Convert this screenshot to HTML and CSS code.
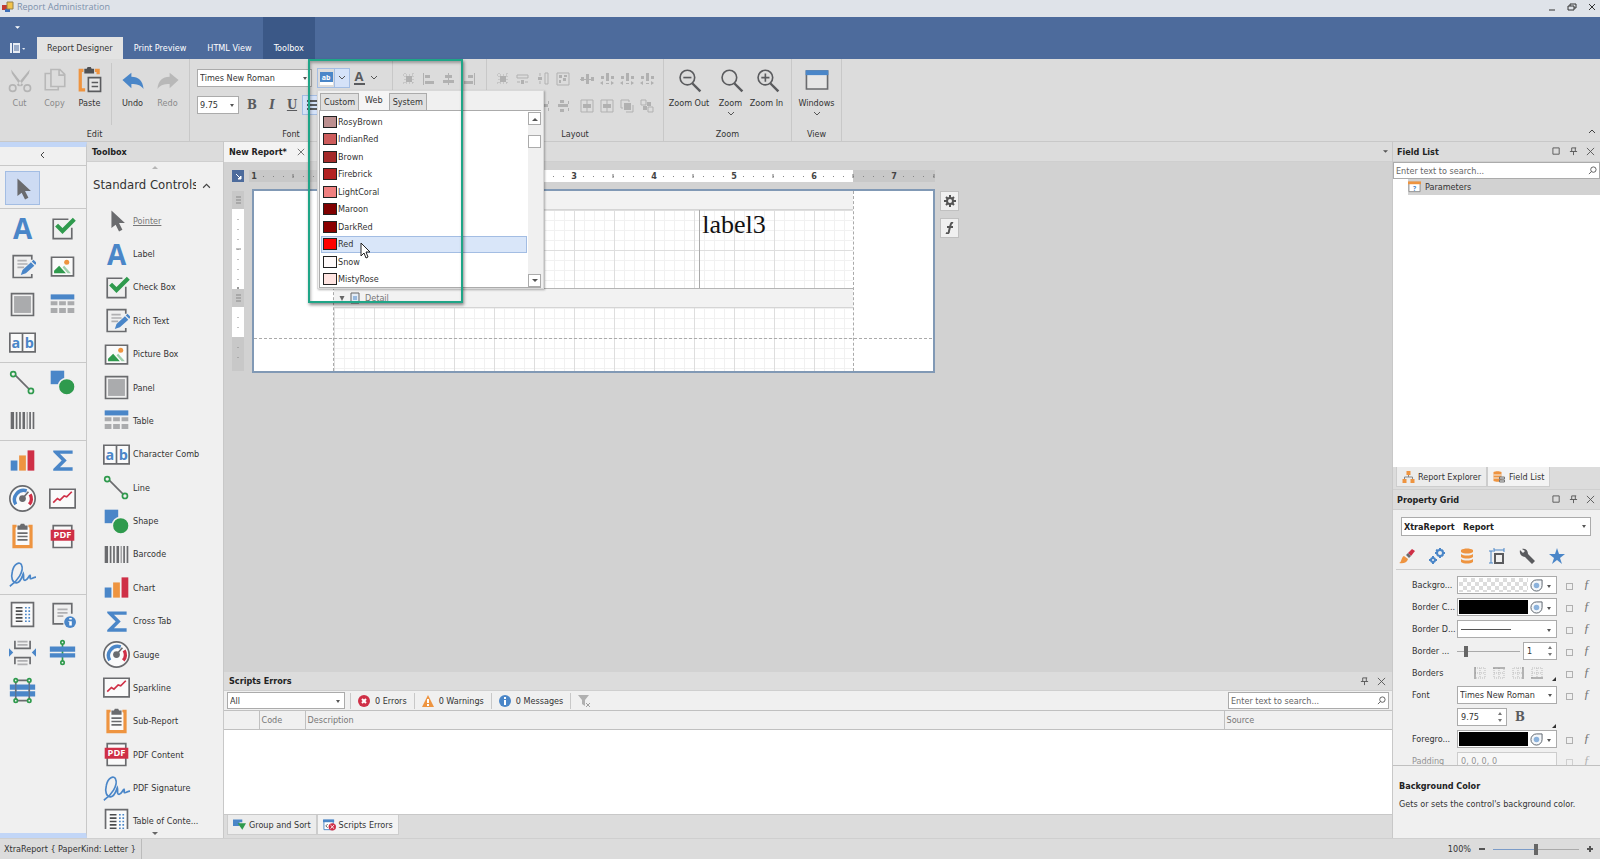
FILE: index.html
```html
<!DOCTYPE html>
<html lang="en">
<head>
<meta charset="utf-8">
<meta content="width=device-width,initial-scale=1" name="viewport">
<title>Report Administration</title>
<link rel="stylesheet" href="styles.css">
</head>

<body>
<!-- icon set, 32 unit grid -->
<svg class="defs" aria-hidden="true">
	<symbol id="i-pointer" viewBox="0 0 32 32"><path fill="#6a6b6e" d="M10 4v21l5-4 4 8 4-2-4-8h7z"/></symbol>
	<symbol id="i-label" viewBox="0 0 32 32"><text x="16" y="28" text-anchor="middle" class="glyph" font-size="33">A</text></symbol>
	<symbol id="i-check" viewBox="0 0 32 32"><path fill="none" stroke="#6a6b6e" stroke-width="2" d="M23 5H5v23h22V15"/><path fill="none" stroke="#2f9a4d" stroke-width="5" d="M9 12l7 7L30 5"/></symbol>
	<symbol id="i-rich" viewBox="0 0 32 32"><path fill="none" stroke="#6a6b6e" stroke-width="2" d="M27 8V3H5v26h22v-4"/><path stroke="#b0b0b2" stroke-width="2" d="M10 9h11M10 13h12M10 17h8"/><path fill="#4a86c8" d="M14 26l2-6 10-9 4 4-10 9zM27 10l2-2 4 4-2 2z"/></symbol>
	<symbol id="i-picture" viewBox="0 0 32 32"><path fill="#fafafa" stroke="#6a6b6e" stroke-width="2" d="M3 5h26v22H3z"/><circle cx="21" cy="11" r="3" fill="#ee9440"/><path fill="#2f9a4d" d="M6 24v-3l6-6 8 9z"/><path fill="#9dcfaa" d="M16 17l2-2 8 9h-4z"/></symbol>
	<symbol id="i-panel" viewBox="0 0 32 32"><path fill="none" stroke="#6a6b6e" stroke-width="2" d="M3 3h26v26H3z"/><path fill="#aaabad" d="M6 6h20v20H6z"/></symbol>
	<symbol id="i-table" viewBox="0 0 32 32"><path fill="#4a86c8" d="M2 4h28v6H2z"/><path fill="#aaabad" d="M2 12h8v5H2zM12 12h8v5h-8zM22 12h8v5h-8zM2 20h8v6H2zM12 20h8v6h-8zM22 20h8v6h-8z"/></symbol>
	<symbol id="i-comb" viewBox="0 0 32 32"><path fill="#fafafa" stroke="#6a6b6e" stroke-width="2" d="M1 5h30v22H1zM16 5v22"/><text x="8" y="22" text-anchor="middle" class="glyph" font-size="17">a</text><text x="24" y="22" text-anchor="middle" class="glyph" font-size="17">b</text></symbol>
	<symbol id="i-line" viewBox="0 0 32 32"><path stroke="#6a6b6e" stroke-width="2" d="M7 7l18 18"/><g fill="#f0f0f0" stroke="#2f9a4d" stroke-width="2"><circle cx="5" cy="6" r="3"/><circle cx="26" cy="26" r="3"/></g></symbol>
	<symbol id="i-shape" viewBox="0 0 32 32"><path fill="#4a86c8" d="M2 2h16v16H2z"/><circle cx="21" cy="21" r="10" fill="#2f9a4d" stroke="#f0f0f0" stroke-width="2"/></symbol>
	<symbol id="i-barcode" viewBox="0 0 32 32"><path fill="#6a6b6e" d="M2 6h4v20H2zM8 6h2v20H8zM12 6h2v20h-2zM16 6h3v20h-3zM21 6h1v20h-1zM24 6h2v20h-2zM28 6h2v20h-2z"/></symbol>
	<symbol id="i-chart" viewBox="0 0 32 32"><path fill="#4a86c8" d="M2 16h8v12H2z"/><path fill="#ee9440" d="M12 10h8v18h-8z"/><path fill="#cf2f46" d="M22 4h8v24h-8z"/></symbol>
	<symbol id="i-sigma" viewBox="0 0 32 32"><path fill="#4a86c8" d="M5 4h23v4H13l8 8-8 8h15v4H5v-2l10-10L5 6z"/></symbol>
	<symbol id="i-gauge" viewBox="0 0 32 32"><circle cx="16" cy="16" r="15" fill="#fafafa" stroke="#6a6b6e" stroke-width="2"/><path fill="none" stroke="#4a86c8" stroke-width="4" d="M8 23A11 11 0 0 1 21 7"/><path fill="none" stroke="#cf2f46" stroke-width="4" d="M25 11a10 10 0 0 1-1 12"/><circle cx="16" cy="16" r="4" fill="#6a6b6e"/><path stroke="#6a6b6e" stroke-width="2" d="M16 16l7-8"/></symbol>
	<symbol id="i-spark" viewBox="0 0 32 32"><path fill="#fafafa" stroke="#6a6b6e" stroke-width="2" d="M1 5h30v22H1z"/><path fill="none" stroke="#cf2f46" stroke-width="2" d="M5 21l5-5 3 2 5-5 3 1 6-6"/></symbol>
	<symbol id="i-sub" viewBox="0 0 32 32"><path fill="none" stroke="#ee9440" stroke-width="4" d="M9 4H6v24h20V4h-3"/><path fill="#fafafa" d="M8 5h16v21H8z"/><path fill="#6a6b6e" d="M10 3h3l1-2h4l1 2h3v5H10z"/><path stroke="#6a6b6e" stroke-width="2" d="M10 12h12M10 16h12M10 20h12"/></symbol>
	<symbol id="i-pdf" viewBox="0 0 32 32"><path fill="#fafafa" stroke="#6a6b6e" stroke-width="2" d="M5 3h22v26H5z"/><path fill="#cf2f46" d="M2 8h28v13H2z"/><text x="16" y="18" text-anchor="middle" class="glyph white" font-size="11">PDF</text></symbol>
	<symbol id="i-sign" viewBox="0 0 32 32"><path fill="none" stroke="#4a86c8" stroke-width="2" d="M1 30C10 24 18 12 15 5 13 0 6 3 4 12c-2 8 0 14 5 14 5-1 6-6 8-11 1 3-1 8 2 8s4-5 6-6c1 1-1 4 1 4s3-2 6-2"/></symbol>
	<symbol id="i-toc" viewBox="0 0 32 32"><path fill="#fafafa" stroke="#6a6b6e" stroke-width="2" d="M3 2h26v28H3z"/><path stroke="#4b4c4e" stroke-width="2" d="M8 8h8M8 12h8M8 16h8M8 20h8M8 24h8"/><path stroke="#4a86c8" stroke-width="2" d="M19 8h2M23 8h2M19 12h2M23 12h2M19 16h2M23 16h2M19 20h2M23 20h2M19 24h2M23 24h2"/></symbol>
	<symbol id="i-info" viewBox="0 0 32 32"><path fill="none" stroke="#6a6b6e" stroke-width="2" d="M27 15V3H5v24h12"/><path stroke="#b0b0b2" stroke-width="2" d="M10 10h12M10 14h12M10 18h7"/><circle cx="25" cy="25" r="7" fill="#4a86c8"/><path fill="#fff" d="M24 20h3v2h-3zM23 24h4v5h-3v-4h-1z"/></symbol>
	<symbol id="i-break" viewBox="0 0 32 32"><path fill="none" stroke="#6a6b6e" stroke-width="2" d="M7 2v9h18V2M7 30v-8h18v8"/><path stroke="#b0b0b2" stroke-width="2" d="M10 3h12M10 7h12M10 26h12M10 30h12"/><path fill="#4a86c8" d="M0 11l5 5-5 5zM32 11l-5 5 5 5z"/></symbol>
	<symbol id="i-cross" viewBox="0 0 32 32"><path stroke="#2f9a4d" stroke-width="2" d="M16 4v24"/><path fill="#4a86c8" d="M1 9h30v6H1zM1 17h30v5H1z"/><g fill="#f0f0f0" stroke="#2f9a4d" stroke-width="2"><circle cx="16" cy="4" r="2"/><circle cx="16" cy="28" r="2"/></g></symbol>
	<symbol id="i-crossbox" viewBox="0 0 32 32"><path fill="none" stroke="#6a6b6e" stroke-width="2" d="M8 4h16v24H8z"/><path fill="#4a86c8" d="M1 9h30v6H1zM1 17h30v6H1z"/><path stroke="#6a6b6e" d="M8 9v14M24 9v14"/><g fill="#f0f0f0" stroke="#2f9a4d" stroke-width="2"><circle cx="8" cy="4" r="2"/><circle cx="24" cy="4" r="2"/><circle cx="8" cy="28" r="2"/><circle cx="24" cy="28" r="2"/></g></symbol>

	<symbol id="i-down" viewBox="0 0 8 8"><path fill="none" stroke="#555" d="M1 2l3 3 3-3"/></symbol>
	<symbol id="i-pin" viewBox="0 0 10 10"><path fill="none" stroke="#555" d="M3 1h5M3 1v4M7 1v4M1 5h8M5 5v4"/></symbol>
	<symbol id="i-max" viewBox="0 0 10 10"><path fill="none" stroke="#555" d="M1 1h7v7H1z"/></symbol>
	<symbol id="i-close" viewBox="0 0 10 10"><path stroke="#555" d="M1 1l8 8M9 1L1 9"/></symbol>
	<symbol id="i-find" viewBox="0 0 10 10"><circle cx="6" cy="4" r="3" fill="none" stroke="#555"/><path stroke="#555" d="M4 6L1 9"/></symbol>
	<symbol id="i-eye" viewBox="0 0 14 14"><path fill="#f4f7fa" stroke="#555d66" d="M13 1v6a6 6 0 1 1-6-6z"/><circle cx="7" cy="7" r="3" fill="#8bb2dc"/></symbol>

	<!-- 14 unit alignment icons -->
	<symbol id="a-grid" viewBox="0 0 14 14"><path fill="#b1b1b1" d="M4 4h6v6H4z"/><path stroke="#b1b1b1" stroke-dasharray="1 2" d="M1 3h12M1 11h12M3 1v12M11 1v12"/></symbol>
	<symbol id="a-left" viewBox="0 0 14 14"><path fill="#b1b1b1" d="M1 1h1v12H1zM3 3h5v3H3zM3 9h9v3H3z"/></symbol>
	<symbol id="a-mid" viewBox="0 0 14 14"><path fill="#b1b1b1" d="M6 1h1v12H6zM3 3h7v3H3zM1 8h11v3H1z"/></symbol>
	<symbol id="a-right" viewBox="0 0 14 14"><path fill="#b1b1b1" d="M12 1h1v12h-1zM6 3h5v3H6zM2 9h9v3H2z"/></symbol>
	<symbol id="a-wide" viewBox="0 0 14 14"><path fill="none" stroke="#b1b1b1" d="M1 3h11v3H1zM1 10h3M9 10h3"/><path fill="#b1b1b1" d="M5 8h3v4H5z"/></symbol>
	<symbol id="a-tall" viewBox="0 0 14 14"><path fill="none" stroke="#b1b1b1" d="M9 1h3v11H9zM4 1v3M4 9v3"/><path fill="#b1b1b1" d="M2 5h4v3H2z"/></symbol>
	<symbol id="a-both" viewBox="0 0 14 14"><path fill="none" stroke="#b1b1b1" d="M1 1h12v12H1z"/><path fill="#b1b1b1" d="M3 3h3v3H3zM8 3h3v2H8zM3 8h2v3H3zM7 6h3v3H7z"/></symbol>
	<symbol id="a-space" viewBox="0 0 14 14"><path fill="#b1b1b1" d="M6 2h3v10H6zM1 5h3v4H1zM11 5h3v4h-3zM0 7h14v1H0z"/></symbol>
	<symbol id="a-space2" viewBox="0 0 14 14"><path fill="#b1b1b1" d="M6 1h3v8H6zM1 4h3v3H1zM11 4h3v3h-3zM0 11l3-2v4zM14 11l-3-2v4zM6 11h3v1H6z"/></symbol>
	<symbol id="a-vspace" viewBox="0 0 14 14"><path fill="#b1b1b1" d="M2 5h10v3H2zM4 1h4v3H4zM4 10h4v3H4zM12 2h1v3h-1zM12 9h1v3h-1z"/></symbol>
	<symbol id="a-center" viewBox="0 0 14 14"><path fill="none" stroke="#b1b1b1" d="M1 1h12v12H1zM7 1v12"/><path fill="#b1b1b1" d="M3 5h8v4H3z"/></symbol>
	<symbol id="a-front" viewBox="0 0 14 14"><path fill="none" stroke="#b1b1b1" d="M1 1h8v2M1 1v8h2M13 6v7H6"/><path fill="#b1b1b1" d="M4 4h7v7H4z"/></symbol>
	<symbol id="a-back" viewBox="0 0 14 14"><path fill="none" stroke="#b1b1b1" d="M1 1h5v5H1zM8 8h5v5H8z"/><path fill="#b1b1b1" d="M7 3h4v4H7zM3 7h4v4H3z"/></symbol>
</svg>

<header class="titlebar">
	<svg class="logo" viewBox="0 0 12 12"><path fill="#c33a33" d="M0 4h5v5H0z"/><path fill="#3d6fb8" d="M3 8h5v3H3z"/><path fill="#f3c34b" stroke="#94804a" d="M5 1h6v7H5z"/></svg>
	<h1>Report Administration</h1>
	<div class="window_buttons">
		<button aria-label="Minimize"><svg viewBox="0 0 10 10"><path stroke="#333" d="M2 8h6"/></svg></button>
		<button aria-label="Restore"><svg viewBox="0 0 10 10"><path fill="none" stroke="#333" d="M1 4h6v4H1zM3 4V2h6v4H7"/></svg></button>
		<button aria-label="Close"><svg viewBox="0 0 10 10"><path stroke="#333" d="M2 2l6 6M8 2L2 8"/></svg></button>
	</div>
</header>

<nav class="tabs">
	<button class="app_menu" aria-label="File"><svg viewBox="0 0 16 12"><path fill="#e8edf5" d="M0 1h2v10H0zM3 1h7v10H3zM12 6h3l-1 2z"/><path stroke="#4d6b9c" d="M4 4h5M4 6h5M4 8h5"/></svg></button>
	<a class="tab active" href="#">Report Designer</a>
	<a class="tab" href="#">Print Preview</a>
	<a class="tab" href="#">HTML View</a>
	<a class="tab dark" href="#">Toolbox</a>
	<svg class="quick" viewBox="0 0 6 4"><path fill="#fff" d="M0 0h6L3 3z"/></svg>
</nav>

<section class="ribbon">
	<div class="group g_edit">
		<div class="group_body">
			<button class="big" disabled><svg viewBox="0 0 32 32"><g fill="none" stroke="#b4b4b4" stroke-width="2"><circle cx="7" cy="26" r="4"/><circle cx="25" cy="26" r="4"/></g><path fill="#b4b4b4" d="M5 3l15 19-3 2L6 8zM28 3L12 22l3 2L27 8z"/></svg>Cut</button>
			<button class="big" disabled><svg viewBox="0 0 32 32"><path fill="none" stroke="#b8b8b8" stroke-width="2" d="M10 8H4v20h16v-4M11 3h11l6 6v15H11zM21 3v7h7"/></svg>Copy</button>
			<button class="big"><svg viewBox="0 0 32 32"><path fill="none" stroke="#ee9440" stroke-width="4" d="M8 4H4v24h6M22 4h4v5"/><path fill="#4f5053" d="M9 2h3l1-2h4l1 2h3v6H9z"/><path fill="#e6e6e6" stroke="#5a5b5e" stroke-width="2" d="M14 13h15v17H14z"/><path stroke="#5a5b5e" stroke-width="2" d="M18 19h8M18 24h8"/></svg>Paste</button>
			<i class="sep"></i>
			<button class="big"><svg viewBox="0 0 32 32"><path fill="#4a86c8" d="M3 16L14 7v5c9 0 14 5 15 15-4-5-8-6-15-6v5z"/></svg>Undo</button>
			<button class="big" disabled><svg viewBox="0 0 32 32"><path fill="#b8b8b8" d="M29 16L18 7v5C9 12 4 17 3 27c4-5 8-6 15-6v5z"/></svg>Redo</button>
		</div>
		<h2>Edit</h2>
	</div>
	<div class="group g_font">
		<div class="group_body rows">
			<div class="row">
				<span class="combo font_name"><select aria-label="Font name"><option>Times New Roman</option></select></span>
				<button class="split pressed" aria-label="Background color"><svg class="ic16" viewBox="0 0 16 14"><path fill="#4a86c8" d="M2 1h13v10H2z"/><text x="8" y="9" text-anchor="middle" class="glyph white" font-size="7">ab</text><path fill="#fff" d="M2 11h13v3H2z"/></svg><span class="drop"><svg class="ic8"><use href="#i-down"/></svg></span></button>
				<button class="split" aria-label="Foreground color"><svg class="ic16" viewBox="0 0 16 14"><text x="8" y="10" text-anchor="middle" class="glyph dark" font-size="13">A</text><path fill="#5a5b5e" d="M3 12h11v2H3z"/></svg><span class="drop"><svg class="ic8"><use href="#i-down"/></svg></span></button>
			</div>
			<div class="row">
				<span class="combo font_size"><select aria-label="Font size"><option>9.75</option></select></span>
				<button class="style_btn"><b>B</b></button>
				<button class="style_btn"><em>I</em></button>
				<button class="style_btn"><u>U</u></button>
				<button class="align_btn" aria-label="Align left"><svg viewBox="0 0 14 14"><path stroke="#5a5b5e" stroke-width="2" d="M1 3h12M1 7h12M1 11h12"/></svg></button>
			</div>
		</div>
		<h2>Font</h2>
	</div>
	<div class="group g_align">
		<div class="group_body rows">
			<div class="row icons">
				<svg><use href="#a-grid"/></svg><svg><use href="#a-left"/></svg><svg><use href="#a-mid"/></svg><svg><use href="#a-right"/></svg>
			</div>
		</div>
	</div>
	<div class="group g_layout">
		<div class="group_body rows">
			<div class="row icons">
				<svg><use href="#a-grid"/></svg><svg><use href="#a-wide"/></svg><svg><use href="#a-tall"/></svg><svg class="last"><use href="#a-both"/></svg><svg><use href="#a-space"/></svg><svg><use href="#a-space2"/></svg><svg><use href="#a-space2"/></svg><svg><use href="#a-space2"/></svg>
			</div>
			<div class="row icons">
				<svg><use href="#a-vspace"/></svg><svg><use href="#a-vspace"/></svg><svg><use href="#a-vspace"/></svg><svg class="last"><use href="#a-vspace"/></svg><svg><use href="#a-center"/></svg><svg><use href="#a-center"/></svg><svg><use href="#a-front"/></svg><svg><use href="#a-back"/></svg>
			</div>
		</div>
		<h2>Layout</h2>
	</div>
	<div class="group g_zoom">
		<div class="group_body">
			<button class="big wide"><svg viewBox="0 0 32 32"><g fill="none" stroke="#5a5b5e" stroke-width="2"><circle cx="14" cy="13" r="9"/><path d="M9 13h10"/><path stroke-width="3" d="M20 20l10 10"/></g></svg>Zoom Out</button>
			<button class="big"><svg viewBox="0 0 32 32"><g fill="none" stroke="#5a5b5e" stroke-width="2"><circle cx="14" cy="13" r="9"/><path stroke-width="3" d="M20 20l10 10"/></g></svg>Zoom<svg class="ic8"><use href="#i-down"/></svg></button>
			<button class="big"><svg viewBox="0 0 32 32"><g fill="none" stroke="#5a5b5e" stroke-width="2"><circle cx="14" cy="13" r="9"/><path d="M9 13h10M14 8v10"/><path stroke-width="3" d="M20 20l10 10"/></g></svg>Zoom In</button>
		</div>
		<h2>Zoom</h2>
	</div>
	<div class="group g_view">
		<div class="group_body">
			<button class="big wide"><svg viewBox="0 0 32 32"><path fill="#e6e6e6" stroke="#6a6b6e" stroke-width="2" d="M3 5h26v22H3z"/><path fill="#4a86c8" d="M2 4h28v6H2z"/></svg>Windows<svg class="ic8"><use href="#i-down"/></svg></button>
		</div>
		<h2>View</h2>
	</div>
	<button class="collapse" aria-label="Collapse ribbon"><svg viewBox="0 0 8 8"><path fill="none" stroke="#444" d="M1 6l3-3 3 3"/></svg></button>
</section>

<main class="workspace">
	<aside class="palette">
		<button class="fold" aria-label="Collapse"><svg viewBox="0 0 8 8"><path fill="none" stroke="#444" d="M5 1L2 4l3 3"/></svg></button>
		<div class="tools"><button class="on" aria-label="Pointer"><svg><use href="#i-pointer"/></svg></button></div>
		<div class="tools">
			<button aria-label="Label"><svg><use href="#i-label"/></svg></button><button aria-label="Check Box"><svg><use href="#i-check"/></svg></button>
			<button aria-label="Rich Text"><svg><use href="#i-rich"/></svg></button><button aria-label="Picture Box"><svg><use href="#i-picture"/></svg></button>
			<button aria-label="Panel"><svg><use href="#i-panel"/></svg></button><button aria-label="Table"><svg><use href="#i-table"/></svg></button>
			<button aria-label="Character Comb"><svg><use href="#i-comb"/></svg></button>
		</div>
		<div class="tools">
			<button aria-label="Line"><svg><use href="#i-line"/></svg></button><button aria-label="Shape"><svg><use href="#i-shape"/></svg></button>
			<button aria-label="Barcode"><svg><use href="#i-barcode"/></svg></button>
		</div>
		<div class="tools">
			<button aria-label="Chart"><svg><use href="#i-chart"/></svg></button><button aria-label="Cross Tab"><svg><use href="#i-sigma"/></svg></button>
			<button aria-label="Gauge"><svg><use href="#i-gauge"/></svg></button><button aria-label="Sparkline"><svg><use href="#i-spark"/></svg></button>
			<button aria-label="Sub-Report"><svg><use href="#i-sub"/></svg></button><button aria-label="PDF Content"><svg><use href="#i-pdf"/></svg></button>
			<button aria-label="PDF Signature"><svg><use href="#i-sign"/></svg></button>
		</div>
		<div class="tools">
			<button aria-label="Table of Contents"><svg><use href="#i-toc"/></svg></button><button aria-label="Page Info"><svg><use href="#i-info"/></svg></button>
			<button aria-label="Page Break"><svg><use href="#i-break"/></svg></button><button aria-label="Cross-band Line"><svg><use href="#i-cross"/></svg></button>
			<button aria-label="Cross-band Box"><svg><use href="#i-crossbox"/></svg></button>
		</div>
	</aside>

	<aside class="toolbox">
		<h3 class="caption">Toolbox</h3>
		<svg class="scroll_mark" viewBox="0 0 6 4"><path fill="#b5b5b5" d="M0 4h6L3 1z"/></svg>
		<button class="category"><span>Standard Controls</span><svg viewBox="0 0 8 8"><path fill="none" stroke="#444" d="M1 6l3-3 3 3"/></svg></button>
		<div class="tool_clip">
			<ul class="tool_list">
				<li><button class="current"><svg><use href="#i-pointer"/></svg>Pointer</button></li>
				<li><button><svg><use href="#i-label"/></svg>Label</button></li>
				<li><button><svg><use href="#i-check"/></svg>Check Box</button></li>
				<li><button><svg><use href="#i-rich"/></svg>Rich Text</button></li>
				<li><button><svg><use href="#i-picture"/></svg>Picture Box</button></li>
				<li><button><svg><use href="#i-panel"/></svg>Panel</button></li>
				<li><button><svg><use href="#i-table"/></svg>Table</button></li>
				<li><button><svg><use href="#i-comb"/></svg>Character Comb</button></li>
				<li><button><svg><use href="#i-line"/></svg>Line</button></li>
				<li><button><svg><use href="#i-shape"/></svg>Shape</button></li>
				<li><button><svg><use href="#i-barcode"/></svg>Barcode</button></li>
				<li><button><svg><use href="#i-chart"/></svg>Chart</button></li>
				<li><button><svg><use href="#i-sigma"/></svg>Cross Tab</button></li>
				<li><button><svg><use href="#i-gauge"/></svg>Gauge</button></li>
				<li><button><svg><use href="#i-spark"/></svg>Sparkline</button></li>
				<li><button><svg><use href="#i-sub"/></svg>Sub-Report</button></li>
				<li><button><svg><use href="#i-pdf"/></svg>PDF Content</button></li>
				<li><button><svg><use href="#i-sign"/></svg>PDF Signature</button></li>
				<li><button><svg><use href="#i-toc"/></svg>Table of Conte...</button></li>
			</ul>
		</div>
		<svg class="scroll_mark" viewBox="0 0 6 4"><path fill="#666" d="M0 0h6L3 3z"/></svg>
	</aside>

	<section class="center">
		<div class="doc_tabs">
			<a class="doc_tab" href="#">New Report*<svg class="ic8"><use href="#i-close"/></svg></a>
			<svg class="tab_menu" viewBox="0 0 6 4"><path fill="#555" d="M0 0h6L3 3z"/></svg>
		</div>
		<div class="designer">
			<button class="corner" aria-label="Report tasks"><svg viewBox="0 0 11 11"><path stroke="#fff" fill="#fff" d="M3 3l4 4M8 5v3H5z"/></svg></button>
			<svg class="hruler" viewBox="-4 0 690 12">
				<defs><pattern id="dots" width="10" height="12" patternUnits="userSpaceOnUse"><path fill="#888" d="M0 6h1v1H0z"/></pattern></defs>
				<path fill="#c8c8c8" d="M0 0h682v12H0z"/><path fill="#fff" d="M80 0h520v12H80z"/>
				<path fill="url(#dots)" d="M4 0h678v12H4z"/>
				<path stroke="#777" d="M40 4v4M120 4v4M200 4v4M280 4v4M360 4v4M440 4v4M520 4v4M600 4v4M681 4v4"/>
				<g class="nums" text-anchor="middle">
					<path fill="#c8c8c8" d="M-4 0h8v12h-8zM636 0h8v12h-8z"/><path fill="#fff" d="M156 0h8v12h-8zM236 0h8v12h-8zM316 0h8v12h-8zM396 0h8v12h-8zM476 0h8v12h-8zM556 0h8v12h-8z"/>
					<text x="1" y="9">1</text><text x="321" y="9">3</text><text x="401" y="9">4</text><text x="481" y="9">5</text><text x="561" y="9">6</text><text x="641" y="9">7</text>
				</g>
			</svg>
			<div class="vruler">
				<svg class="band_mark" viewBox="0 0 12 18"><path stroke="#888" d="M4 6h5M4 9h5M4 12h5"/></svg>
				<svg class="v_big" viewBox="0 0 12 80"><path fill="#fff" d="M0 0h12v80H0z"/><path stroke="#888" d="M4 40h5"/><path stroke="#888" stroke-dasharray="1 9" d="M6 10v66"/><path stroke="#333" d="M6 78v2"/></svg>
				<svg class="band_mark" viewBox="0 0 12 18"><path stroke="#888" d="M4 6h5M4 9h5M4 12h5"/></svg>
				<svg class="v_small" viewBox="0 0 12 30"><path fill="#fff" d="M0 0h12v30H0z"/><path stroke="#888" stroke-dasharray="1 9" d="M6 10v20"/></svg>
				<svg class="v_end" viewBox="0 0 12 34"><path stroke="#888" stroke-dasharray="1 9" d="M6 10v20"/></svg>
			</div>
			<div class="surface">
				<div class="bands">
					<div class="band"></div>
					<div class="grid_area tall"><span class="cell"></span><span class="cell">label3</span></div>
					<div class="band"><svg viewBox="0 0 6 6"><path fill="#666" d="M0 0h6L3 6z"/></svg><svg class="band_icon" viewBox="0 0 10 12"><path fill="#e4ecf5" stroke="#666" d="M1 1h8v10H1z"/><path stroke="#4a86c8" d="M3 5h4M3 7h4"/></svg>Detail</div>
					<div class="grid_area low"></div>
				</div>
			</div>
			<div class="smart">
				<button aria-label="Properties"><svg viewBox="0 0 12 12"><path stroke="#555" stroke-width="2" d="M6 0v12M0 6h12M2 2l8 8M10 2l-8 8"/><circle cx="6" cy="6" r="3" fill="#f0f0f0" stroke="#555" stroke-width="2"/></svg></button>
				<button aria-label="Expression"><svg viewBox="0 0 12 12"><path fill="none" stroke="#555" stroke-width="2" d="M9 1C7 0 7 2 6 5L5 9c0 2-1 3-3 2M3 5h6"/></svg></button>
			</div>
		</div>
		<div class="errors">
			<div class="caption"><h3>Scripts Errors</h3><span class="tools_r"><svg><use href="#i-pin"/></svg><svg><use href="#i-close"/></svg></span></div>
			<div class="error_bar">
				<span class="combo filter"><select aria-label="Script"><option>All</option></select></span>
				<button><svg viewBox="0 0 12 12"><circle cx="6" cy="6" r="6" fill="#cf2f46"/><path stroke="#fff" stroke-width="2" d="M4 4l4 4M8 4l-4 4"/></svg>0 Errors</button>
				<button><svg viewBox="0 0 12 12"><path fill="#ee9440" d="M6 0l6 12H0z"/><path stroke="#fff" stroke-width="2" d="M6 4v4M6 9v2"/></svg>0 Warnings</button>
				<button><svg viewBox="0 0 12 12"><circle cx="6" cy="6" r="6" fill="#4a86c8"/><path stroke="#fff" stroke-width="2" d="M6 2v2M6 5v5"/></svg>0 Messages</button>
				<button aria-label="Clear filter"><svg viewBox="0 0 12 12"><path fill="#b0b0b0" d="M0 0h11L7 5v6L4 9V5z"/><path stroke="#a0a0a0" d="M8 8l4 4M12 8l-4 4"/></svg></button>
				<label class="search"><input type="text" placeholder="Enter text to search..." aria-label="Search errors"><svg><use href="#i-find"/></svg></label>
			</div>
			<div class="error_body">
				<table>
					<thead><tr><th class="c_icon"></th><th class="c_code">Code</th><th>Description</th><th class="c_src">Source</th></tr></thead>
				</table>
			</div>
			<div class="foot_tabs">
				<a href="#"><svg viewBox="0 0 14 12"><path fill="#4a86c8" d="M0 0h10v3H7v4H0z"/><path fill="#2f9a4d" d="M5 4h9l-4 7z"/></svg>Group and Sort</a>
				<a href="#" class="active"><svg viewBox="0 0 14 12"><path fill="#fff" stroke="#4a86c8" d="M1 1h10v10H1z"/><path fill="#4a86c8" d="M0 0h12v3H0z"/><path fill="none" stroke="#555" d="M5 5L3 7l2 2"/><circle cx="10" cy="8" r="4" fill="#cf2f46"/><path stroke="#fff" d="M8 6l4 4M12 6l-4 4"/></svg>Scripts Errors</a>
			</div>
		</div>
	</section>

	<aside class="side">
		<div class="caption"><h3>Field List</h3><span class="tools_r"><svg><use href="#i-max"/></svg><svg><use href="#i-pin"/></svg><svg><use href="#i-close"/></svg></span></div>
		<label class="search"><input type="text" placeholder="Enter text to search..." aria-label="Search fields"><svg><use href="#i-find"/></svg></label>
		<ul class="fields">
			<li><svg viewBox="0 0 14 12"><path fill="#fff" stroke="#8a8a8a" d="M1 1h12v10H1z"/><path fill="#ee9440" d="M0 0h14v3H0z"/><text x="7" y="10" text-anchor="middle" class="glyph" font-size="7">?</text></svg>Parameters</li>
		</ul>
		<div class="foot_tabs">
			<a href="#"><svg viewBox="0 0 12 12"><path fill="#ee9440" d="M4 0h4v4H4zM0 8h4v4H0zM8 8h4v4H8z"/><path fill="none" stroke="#888" d="M2 8V6h8v2M6 4v2"/></svg>Report Explorer</a>
			<a href="#" class="active"><svg viewBox="0 0 12 12"><path fill="#ee9440" d="M0 1c2-1 6-1 8 0v9c-2 1-6 1-8 0z"/><path stroke="#f3f3f3" d="M0 4h8M0 7h8"/><path fill="#ddd" stroke="#777" d="M6 6h5v2H6zM6 9h5v2H6z"/></svg>Field List</a>
		</div>
		<div class="caption"><h3>Property Grid</h3><span class="tools_r"><svg><use href="#i-max"/></svg><svg><use href="#i-pin"/></svg><svg><use href="#i-close"/></svg></span></div>
		<div class="grid_head">
			<span class="combo object"><select aria-label="Object"><option>XtraReport &nbsp; Report</option></select></span>
			<div class="cats">
				<button aria-label="Appearance"><svg viewBox="0 0 16 16"><path fill="#cf2f46" d="M9 5l4-4 3 2-4 5z"/><path fill="#6a6b6e" d="M7 7l2-2 3 3-2 2z"/><path fill="#ee9440" d="M0 15c3-1 2-6 5-7l4 3c-1 4-5 5-9 4z"/></svg></button>
				<button aria-label="Behavior"><svg viewBox="0 0 16 16"><g fill="none" stroke="#4a86c8" stroke-width="2"><circle cx="11" cy="5" r="3"/><circle cx="4" cy="12" r="2"/></g><path stroke="#4a86c8" stroke-width="2" d="M11 0v2M11 8v2M6 5h2M14 5h2M4 8v2M4 14v2M0 12h2M6 12h2M7 2l2 1M14 8l-1-1M14 2l-1 1"/></svg></button>
				<button aria-label="Data"><svg viewBox="0 0 16 16"><path fill="#ee9440" d="M2 2c3-2 9-2 12 0v2c-3 2-9 2-12 0zM2 6c3 2 9 2 12 0v3c-3 2-9 2-12 0zM2 11c3 2 9 2 12 0v3c-3 2-9 2-12 0z"/></svg></button>
				<button aria-label="Layout"><svg viewBox="0 0 16 16"><path fill="none" stroke="#4a86c8" d="M5 0v4M15 0v4M5 2h10M0 3h4M0 15h4M2 3v12"/><path fill="none" stroke="#5a5b5e" stroke-width="2" d="M6 6h8v9H6z"/></svg></button>
				<button aria-label="Misc"><svg viewBox="0 0 16 16"><path fill="#5a5b5e" d="M1 2l3 3 2-2-3-2c3-1 6 1 6 5l7 7-3 3-7-7C3 9 0 6 1 2z"/></svg></button>
				<button aria-label="Favorites"><svg viewBox="0 0 16 16"><path fill="#4a86c8" d="M8 0l2 6h6l-5 4 2 6-5-4-5 4 2-6-5-4h6z"/></svg></button>
			</div>
		</div>
		<div class="props">
			<div class="prop"><span>Backgro...</span><button class="color none" aria-label="Background color"><i></i><svg><use href="#i-eye"/></svg></button></div>
			<div class="prop"><span>Border C...</span><button class="color" aria-label="Border color"><i></i><svg><use href="#i-eye"/></svg></button></div>
			<div class="prop"><span>Border D...</span><button class="color dash" aria-label="Border dash style"><i></i></button></div>
			<div class="prop"><label for="bw">Border ...</label><span class="slide"><input type="range" id="bw" min="0" max="16" value="2"><span class="spin narrow"><input type="text" value="1" aria-label="Border width"></span></span></div>
			<div class="prop"><span>Borders</span><span class="sides">
				<svg viewBox="0 0 12 12"><path fill="none" stroke="#bbb" stroke-dasharray="1 1" d="M1 1h10v10H1M6 1v10M1 6h10"/><path stroke="#777" d="M1 0v12"/></svg>
				<svg viewBox="0 0 12 12"><path fill="none" stroke="#bbb" stroke-dasharray="1 1" d="M1 1v10h10V1M6 1v10M1 6h10"/><path stroke="#777" d="M0 1h12"/></svg>
				<svg viewBox="0 0 12 12"><path fill="none" stroke="#bbb" stroke-dasharray="1 1" d="M11 1H1v10h10M6 1v10M1 6h10"/><path stroke="#777" d="M11 0v12"/></svg>
				<svg viewBox="0 0 12 12"><path fill="none" stroke="#bbb" stroke-dasharray="1 1" d="M1 11V1h10v10M6 1v10M1 6h10"/><path stroke="#777" d="M0 11h12"/></svg>
				<i class="launcher"></i></span></div>
			<div class="prop"><label for="fn">Font</label><span class="combo"><select id="fn"><option>Times New Roman</option></select></span></div>
			<div class="prop plain"><span></span><span class="size_row"><span class="spin"><input type="text" value="9.75" aria-label="Size"></span><button class="style_btn"><b>B</b></button><i class="launcher"></i></span></div>
			<div class="prop"><span>Foregro...</span><button class="color" aria-label="Foreground color"><i></i><svg><use href="#i-eye"/></svg></button></div>
			<div class="prop faded"><label for="pad">Padding</label><input type="text" id="pad" value="0, 0, 0, 0"></div>
		</div>
		<div class="hint">
			<h4>Background Color</h4>
			<p>Gets or sets the control's background color.</p>
		</div>
	</aside>
</main>

<footer class="status">
	<span class="status_text">XtraReport { PaperKind: Letter }</span>
	<div class="zoom">
		<label for="zoom">100%</label>
		<button aria-label="Zoom out"><svg viewBox="0 0 8 8"><path stroke="#555" stroke-width="2" d="M1 4h6"/></svg></button>
		<input type="range" id="zoom" min="0" max="100" value="50">
		<button aria-label="Zoom in"><svg viewBox="0 0 8 8"><path stroke="#555" stroke-width="2" d="M1 4h6M4 1v6"/></svg></button>
	</div>
</footer>

<!-- back color drop-down -->
<div class="popup">
	<div class="popup_tabs"><button>Custom</button><button class="active">Web</button><button>System</button></div>
	<div class="popup_body">
		<ul>
			<li><i class="rosybrown"></i>RosyBrown</li>
			<li><i class="indianred"></i>IndianRed</li>
			<li><i class="brown"></i>Brown</li>
			<li><i class="firebrick"></i>Firebrick</li>
			<li><i class="lightcoral"></i>LightCoral</li>
			<li><i class="maroon"></i>Maroon</li>
			<li><i class="darkred"></i>DarkRed</li>
			<li class="hover"><i class="red"></i>Red</li>
			<li><i class="snow"></i>Snow</li>
			<li><i class="mistyrose"></i>MistyRose</li>
		</ul>
		<div class="scrollbar">
			<button aria-label="Scroll up"><svg viewBox="0 0 6 4"><path fill="#555" d="M0 4h6L3 1z"/></svg></button>
			<i class="thumb"></i>
			<button class="end" aria-label="Scroll down"><svg viewBox="0 0 6 4"><path fill="#555" d="M0 0h6L3 3z"/></svg></button>
		</div>
	</div>
</div>
<div class="highlight"></div>
<svg class="cursor" viewBox="0 0 12 18"><path fill="#fff" stroke="#222" d="M1 1v13l3-3 2 5 2-1-2-5h4z"/></svg>
</body>
</html>
```
FILE: styles.css
```css
*{box-sizing: border-box;}
body{margin: 0;height: 100vh;display: flex;flex-direction: column;overflow: hidden;background-color: #dcdcdc;color: #333;font: 9px/12px "DejaVu Sans Condensed","Noto Sans",sans-serif;}
h1,h2,h3,h4,p,ul{margin: 0;padding: 0;font-size: 9px;font-weight: normal;}
ul{list-style: none;}
i,em{font-style: normal;}
svg{display: block;flex: none;}
a{color: inherit;text-decoration: none;}
button{margin: 0;padding: 0;border: 0;background: none;font: inherit;color: inherit;display: flex;align-items: center;justify-content: center;}
input,select{font: inherit;color: inherit;margin: 0;min-width: 0;}
.defs{display: none;}
.glyph{font-family: "Open Sans",sans-serif;font-weight: bold;fill: #4a86c8;}
.glyph.white{fill: #fff;}
.glyph.dark{fill: #5a5b5e;}
.ic8{width: 8px;height: 8px;}
.ic16{width: 16px;height: 14px;}

/* fields */
.combo{position: relative;display: block;height: 18px;}
.combo select{appearance: none;width: 100%;height: 100%;border: 1px solid #ababab;border-radius: 0;background-color: #fff;padding: 0 14px 0 2px;}
.combo:after,.color:after{content: "";position: absolute;right: 5px;top: 8px;border: 2px solid transparent;border-top: 3px solid #555;border-bottom: 0;pointer-events: none;}
.search{display: flex;align-items: center;border: 1px solid #ababab;background-color: #fff;padding-right: 2px;}
.search input{flex: 1;border: 0;outline: 0;padding: 0 2px;background: none;}
.search input::placeholder{color: #666;}
.search svg{width: 9px;height: 9px;}

/* title */
.titlebar{display: flex;align-items: center;height: 17px;padding: 0 2px 3px;gap: 3px;background-color: #dfe3e9;color: #7c90ab;flex: none;}
.titlebar h1{font-family: "Open Sans",sans-serif;flex: 1;}
.logo{width: 12px;height: 12px;}
.window_buttons{display: flex;gap: 10px;padding-right: 1px;}
.window_buttons svg{width: 10px;height: 10px;}

.tabs{position: relative;display: flex;align-items: flex-end;gap: 1px;height: 42px;background-color: #4d6b9c;color: #fff;flex: none;}
.app_menu{width: 36px;height: 22px;}
.app_menu svg{width: 16px;height: 12px;}
.tab{height: 22px;line-height: 22px;padding: 0 10px;}
.tab.active{background-color: #e3e3e3;color: #333;}
.tab.dark{height: 42px;padding: 20px 11px 0;background-color: #3b5887;}
.quick{position: absolute;left: 15px;top: 9px;width: 5px;height: 4px;}

/* ribbon */
.ribbon{position: relative;display: flex;height: 83px;background-color: #dcdcdc;border-bottom: 1px solid #c8c8c8;flex: none;}
.group{display: flex;flex-direction: column;border-right: 1px solid #c8c8c8;}
.group h2{height: 13px;text-align: center;}
.group_body{display: flex;flex: 1;padding: 8px 2px 0;}
.g_edit{width: 190px;}
.g_font{width: 203px;}
.g_align{width: 94px;}
.g_layout{width: 177px;}
.g_zoom{width: 128px;}
.g_view{width: 50px;}
.big{flex-direction: column;justify-content: flex-start;width: 35px;line-height: 14px;white-space: nowrap;}
.big > svg:first-child{width: 26px;height: 26px;margin-bottom: 3px;}
.big:disabled{color: #8a8a8a;}
.big.wide{width: 46px;}
.g_zoom .group_body{gap: 1px;}
.sep{width: 1px;height: 62px;margin: -4px 3px 0 4px;background-color: #c8c8c8;}
.rows{flex-direction: column;padding: 10px 7px 0;gap: 9px;}
.row{display: flex;align-items: center;height: 18px;}
.font_name{width: 115px;}
.font_size{width: 42px;margin-right: 3px;}
.split{border: 1px solid transparent;height: 20px;}
.font_name + .split{margin-left: 5px;}
.drop{display: flex;align-items: center;height: 18px;padding: 0 3px;}
.split.pressed{border-color: #a3bde3;}
.split.pressed .drop{background-color: #d5e2f8;border-left: 1px solid #a3bde3;}
.style_btn{width: 20px;height: 18px;color: #5a5b5e;font: bold 13px/18px "DejaVu Serif Condensed","DejaVu Serif",serif;}
.style_btn em{font-style: italic;}
.align_btn{width: 22px;height: 20px;background-color: #d5e2f8;border: 1px solid #a3bde3;}
.align_btn svg{width: 14px;height: 14px;}
.icons{gap: 6px;padding-top: 1px;}
.icons svg{width: 14px;height: 14px;}
.icons .last{margin-right: 4px;}
.g_align .rows,.g_layout .rows{padding-left: 9px;}
.collapse{position: absolute;right: 4px;bottom: 6px;}
.collapse svg,.fold svg{width: 8px;height: 8px;}

/* docks */
.workspace{flex: 1;min-height: 0;display: grid;grid-template-columns: 87px 137px 1fr 208px;}
.caption{display: flex;align-items: center;height: 20px;padding: 0 5px;background-color: #dcdcdc;border-bottom: 1px solid #cfcfcf;flex: none;font-weight: bold;color: #222;}
.caption h3{flex: 1;font-weight: bold;}
.side .caption{padding-left: 4px;}
.tools_r{display: flex;gap: 8px;}
.tools_r svg{width: 9px;height: 9px;}
.foot_tabs{display: flex;padding: 0 3px;background-color: #dcdcdc;flex: none;}
.foot_tabs a{display: flex;align-items: center;gap: 3px;height: 20px;padding: 0 5px;background-color: #ececec;border: 1px solid #cdcdcd;border-top: 0;}
.foot_tabs a.active{background-color: #f3f3f3;}
.foot_tabs svg{width: 13px;height: 12px;}

.palette{background-color: #f0f0f0;border-right: 1px solid #c8c8c8;border-top: 5px solid #c2d6f7;border-bottom: 5px solid #c2d6f7;}
.fold{width: 100%;height: 19px;padding-bottom: 2px;border-bottom: 1px solid #c8c8c8;}
.tools{display: flex;flex-wrap: wrap;padding: 0 0 1px 2px;border-bottom: 1px solid #c8c8c8;}
.tools:last-child{border-bottom: 0;}
.tools button{width: 40px;height: 38px;}
.tools svg{width: 27px;height: 27px;}
.tools .on{width: 35px;height: 34px;margin: 5px 3px 2px;background-color: #cddbf3;border: 1px solid #a3bde3;}

.toolbox{display: flex;flex-direction: column;min-height: 0;background-color: #f0f0f0;border-right: 1px solid #c8c8c8;}
.scroll_mark{width: 6px;height: 4px;margin: 3px auto 2px;}
.category{padding: 0 12px 0 6px;height: 28px;font-size: 13px;line-height: 18px;}
.category span{flex: 1;overflow: hidden;white-space: nowrap;text-align: left;}
.category svg{width: 9px;height: 9px;margin-left: 6px;}
.tool_clip{flex: 1;min-height: 0;overflow: hidden;padding-top: 5px;}
.tool_list{display: flex;flex-direction: column;height: 634px;}
.tool_list li{flex: 1;display: flex;}
.tool_list button{padding-left: 16px;gap: 3px;}
.tool_list svg{width: 27px;height: 27px;}
.tool_list .current{text-decoration: underline;color: #777;}

.center{display: flex;flex-direction: column;min-width: 0;min-height: 0;}
.doc_tabs{display: flex;align-items: center;justify-content: space-between;height: 20px;padding-right: 4px;border-bottom: 1px solid #cfcfcf;flex: none;}
.doc_tab{display: flex;align-items: center;gap: 10px;height: 20px;padding: 0 5px;background-color: #f3f3f3;font-weight: bold;color: #222;}
.tab_menu{width: 5px;height: 4px;}
.designer{flex: 1;min-height: 0;overflow: hidden;display: grid;grid-template-columns: 12px 683px 18px;grid-template-rows: 12px 184px;column-gap: 8px;row-gap: 7px;align-content: start;padding: 8px;background-color: #d2d2d2;}
.corner{width: 12px;height: 12px;background-color: #4d6b9c;}
.corner svg{width: 11px;height: 11px;}
.hruler{grid-column: 2 / 4;width: 690px;height: 12px;margin-left: -3px;}
.nums{font-size: 9px;font-weight: bold;fill: #444;}
.vruler{padding-top: 2px;}
.vruler svg{width: 12px;background-color: #c8c8c8;}
.band_mark{height: 18px;}
.v_big{height: 80px;}
.v_small{height: 30px;}
.v_end{height: 34px;}
.surface{border: 2px solid #8199b5;background: #fff linear-gradient(90deg,#aaa 60%,transparent 0) 0 147px / 5px 1px repeat-x;padding: 0 79px;}
.bands{height: 100%;border: 1px dashed #aaa;border-width: 0 1px;}
.band{display: flex;align-items: center;gap: 5px;height: 19px;padding-left: 5px;background-color: #f2f2f2;border-bottom: 1px solid #d5d5d5;color: #777;}
.band svg{width: 6px;height: 5px;}
.band .band_icon{width: 10px;height: 12px;}
.grid_area{background-image: linear-gradient(90deg,#dedede 1px,transparent 1px),linear-gradient(#dedede 1px,transparent 1px),linear-gradient(90deg,#f1f1f1 1px,transparent 1px),linear-gradient(#f1f1f1 1px,transparent 1px);background-size: 40px 40px,40px 40px,10px 10px,10px 10px;}
.tall{display: flex;height: 79px;border-bottom: 1px solid #b5b5b5;}
.low{height: 63px;background-image: linear-gradient(90deg,#aaa 60%,transparent 0),linear-gradient(90deg,#dedede 1px,transparent 1px),linear-gradient(90deg,#f1f1f1 1px,transparent 1px),linear-gradient(#f1f1f1 1px,transparent 1px);background-size: 5px 1px,40px 40px,10px 10px,10px 10px;background-position: 0 30px,0 0,0 0,0 0;background-repeat: repeat-x,repeat,repeat,repeat;}
.cell{flex: 1 1 366px;padding-left: 2px;font: 26px/30px "Liberation Serif",serif;color: #111;}
.cell + .cell{flex: 1 1 154px;border-left: 1px solid #aaa;}
.smart{display: flex;flex-direction: column;gap: 7px;padding-top: 2px;}
.smart button{width: 19px;height: 20px;margin-left: -3px;background-color: #f0f0f0;border: 1px solid #c0c0c0;}
.smart svg{width: 12px;height: 12px;}

.errors{display: flex;flex-direction: column;height: 166px;background-color: #dcdcdc;flex: none;}
.errors .caption{height: 19px;padding-right: 6px;}
.error_bar{display: flex;align-items: center;height: 19px;padding: 0 3px;background-color: #f0f0f0;flex: none;}
.filter{width: 118px;height: 17px;margin-right: 5px;}
.error_bar button{gap: 5px;height: 16px;padding: 0 7px;border-left: 1px solid #c8c8c8;}
.error_bar button svg{width: 12px;height: 12px;}
.error_bar .search{width: 161px;height: 17px;margin-left: auto;}
.error_body{flex: 1;background-color: #fff;border-bottom: 1px solid #c8c8c8;}
.error_body table{width: 100%;border-collapse: collapse;table-layout: fixed;}
.error_body th{height: 19px;padding: 0 2px;border: 1px solid #c0c0c0;border-width: 1px 0 1px 1px;background-color: #f0f0f0;font-weight: normal;text-align: left;color: #777;}
.error_body th:first-child{border-left: 0;}
.error_body .c_icon{width: 35px;}
.error_body .c_code{width: 46px;}
.error_body .c_src{width: 168px;}
.errors .foot_tabs{height: 23px;}

.side{display: flex;flex-direction: column;min-height: 0;background-color: #f0f0f0;border-left: 1px solid #c8c8c8;}
.side > .search{height: 17px;flex: none;}
.fields{height: 288px;background-color: #fff;padding-left: 15px;}
.fields li{display: flex;align-items: center;gap: 4px;height: 16px;background-color: #d2d2d2;}
.fields svg{width: 13px;height: 12px;}
.side .foot_tabs{height: 23px;border-bottom: 1px solid #cfcfcf;}
.grid_head{height: 59px;padding: 7px 9px 0 8px;flex: none;}
.object{height: 19px;}
.object select{font-weight: bold;color: #222;}
.cats{display: flex;gap: 14px;margin: 12px -9px 0 -5px;padding: 0 0 5px 3px;border-bottom: 1px solid #cdcdcd;}
.cats svg{width: 16px;height: 16px;}
.props{flex: 1;min-height: 0;overflow: hidden;padding: 5px 8px 0 19px;}
.prop{position: relative;display: grid;grid-template-columns: 45px 100px;align-items: center;height: 22px;}
.prop > *{white-space: nowrap;}
.prop .combo{height: 18px;}
.prop:before{content: "";position: absolute;right: 19px;top: 9px;width: 5px;height: 5px;border: 1px solid #b0b0b0;}
.prop:after{content: "\0192";position: absolute;right: 2px;top: 3px;font: italic 13px/14px "Liberation Serif",serif;color: #777;}
.plain:before,.plain:after{display: none;}
.color{position: relative;justify-content: flex-start;height: 18px;border: 1px solid #ababab;background-color: #fff;padding: 1px;gap: 2px;}
.color i{width: 69px;height: 14px;background-color: #000;}
.color.none i{background: repeating-conic-gradient(#dcdcdc 0 25%,#fff 0 50%) 0 0 / 8px 8px;}
.color.dash i{width: 50px;height: 1px;margin-left: 2px;background-color: #555;}
.color svg{width: 13px;height: 13px;}
.slide,.size_row{display: flex;align-items: center;position: relative;}
.slide input[type="range"]{width: 63px;margin-right: 3px;}
.spin{position: relative;width: 50px;height: 18px;}
.spin.narrow{width: 34px;}
.spin input,.prop > input{width: 100%;height: 18px;border: 1px solid #ababab;background-color: #fff;padding: 0 3px;}
.spin:before,.spin:after{content: "";position: absolute;right: 5px;border: 2px solid transparent;}
.spin:before{top: 4px;border-bottom: 3px solid #777;border-top: 0;}
.spin:after{bottom: 4px;border-top: 3px solid #777;border-bottom: 0;}
.size_row .style_btn{margin-left: 3px;}
.sides{display: flex;gap: 7px;padding-left: 17px;position: relative;}
.sides svg{width: 12px;height: 12px;}
.launcher{position: absolute;right: 1px;bottom: -2px;border-left: 4px solid transparent;border-bottom: 4px solid #333;}
.faded{opacity: .5;}
.hint{height: 73px;padding: 14px 6px;border-top: 1px solid #c0c0c0;flex: none;}
.hint h4{font-weight: bold;color: #222;padding-bottom: 6px;}
.hint p{white-space: nowrap;}

input[type="range"]{appearance: none;height: 12px;background: linear-gradient(#aaa,#aaa) center / 100% 1px no-repeat;}
input[type="range"]::-webkit-slider-thumb{appearance: none;width: 4px;height: 11px;background-color: #666;}

.status{display: flex;justify-content: space-between;align-items: center;height: 21px;border-top: 1px solid #cfcfcf;flex: none;}
.status_text{height: 20px;line-height: 20px;padding: 0 5px 0 4px;border-right: 1px solid #bbb;}
.zoom{display: flex;align-items: center;gap: 7px;padding-right: 6px;}
.zoom svg{width: 8px;height: 8px;}
.zoom input{width: 86px;background-image: linear-gradient(90deg,#7c9cc8 50%,#aaa 0);}

/* drop-down over the ribbon */
.popup{position: absolute;left: 317px;top: 90px;width: 227px;height: 199px;display: flex;flex-direction: column;background-color: #f0f0f0;border: 1px solid #d8d8d8;box-shadow: 1px 1px 2px rgba(0,0,0,.3);}
.popup_tabs{display: flex;align-items: flex-end;height: 19px;padding-left: 2px;}
.popup_tabs button{height: 17px;padding: 0 3px;background-color: #e0e0e0;border: 1px solid #ababab;border-bottom: 0;}
.popup_tabs .active{height: 19px;padding: 0 6px 1px;background-color: #f5f5f5;border-width: 0;}
.popup_body{flex: 1;min-height: 0;display: flex;justify-content: space-between;margin: 0 2px 0 1px;padding: 1px 0 0 1px;background-color: #fff;border: 1px solid #ababab;border-right: 0;}
.popup ul{display: flex;flex-direction: column;width: 206px;padding-top: 1px;margin-bottom: -1px;}
.popup li{flex: 1;display: flex;align-items: center;gap: 1px;padding-left: 2px;}
.popup li i{width: 14px;height: 12px;border: 1px solid #222;}
.popup .hover{background-color: #d9e6f9;outline: 1px solid #a3bde3;outline-offset: -1px;}
.rosybrown{background-color: rosybrown;}
.indianred{background-color: indianred;}
.brown{background-color: brown;}
.firebrick{background-color: firebrick;}
.lightcoral{background-color: lightcoral;}
.maroon{background-color: maroon;}
.darkred{background-color: darkred;}
.red{background-color: red;}
.snow{background-color: snow;}
.mistyrose{background-color: mistyrose;}
.scrollbar{display: flex;flex-direction: column;width: 13px;background-color: #f0f0f0;}
.scrollbar button,.thumb{height: 13px;border: 1px solid #ababab;background-color: #fff;}
.scrollbar svg{width: 6px;height: 4px;}
.thumb{margin-top: 10px;}
.scrollbar .end{margin-top: auto;}
.highlight{position: absolute;left: 308px;top: 59px;width: 155px;height: 244px;border: 2px solid #1fa587;box-shadow: 1px 2px 3px rgba(0,0,0,.45),inset 1px 2px 3px rgba(0,0,0,.3);pointer-events: none;}
.cursor{position: absolute;left: 360px;top: 242px;width: 12px;height: 18px;}
```
